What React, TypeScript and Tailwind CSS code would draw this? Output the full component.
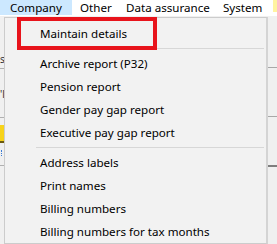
import React from 'react';

const topMenu = [
  { label: 'Company', width: 'w-[72px]', active: true },
  { label: 'Other', width: 'w-[46px]' },
  { label: 'Data assurance', width: 'w-[97px]' },
  { label: 'System', width: 'w-[55px]' },
];

const groups = [
  ['Maintain details'],
  ['Archive report (P32)', 'Pension report', 'Gender pay gap report', 'Executive pay gap report'],
  ['Address labels', 'Print names', 'Billing numbers', 'Billing numbers for tax months'],
];

export default function App() {
  return (
    <div className="relative w-[277px] h-[244px] overflow-hidden bg-[#f0f0f0] font-['Noto_Sans',sans-serif] text-[11.6px] leading-none text-black">
      {/* menu bar */}
      <div className="flex h-[16px] bg-white">
        {topMenu.map(item => (
          <div
            key={item.label}
            className={`${item.width} flex items-center h-[15px] ${item.active ? 'bg-[#cce8ff] pl-[10px]' : 'pl-[8px]'}`}
          >
            {item.label}
          </div>
        ))}
        <div className="ml-auto w-[4px] h-[12px] bg-[#fff3a0]" />
      </div>

      <div className="flex h-[228px]">
        {/* bits of the window behind the menu */}
        <div className="w-[4px] shrink-0 flex flex-col overflow-hidden pt-[38px] text-[10px] text-[#333]">
          <div className="h-[10px]">s</div>
          <div className="mt-[4px] h-px bg-[#b0b0b0]" />
          <div className="mt-[20px] h-[10px]">'l</div>
          <div className="mt-[18px] h-px bg-[#b0b0b0]" />
          <div className="mt-[7px] h-[18px] bg-[#f7d31a] border-b-2 border-[#6b5a10]" />
          <div className="mt-[7px] ml-[1px] h-[6px] border-l border-dotted border-[#3a7bd5]" />
          <div className="mt-[9px] h-px bg-[#b0b0b0]" />
        </div>

        {/* dropdown */}
        <div className="w-[264px] shrink-0 mt-[1px] border border-[#cccccc] border-r-2 border-r-[#d4d4d4] bg-[#f2f2f2] pt-[4px]">
          {groups.map((group, gi) => (
            <div key={gi}>
              {gi > 0 && (
                <div className="h-[7px] pt-[3px] pl-[31px] pr-[2px]">
                  <div className="h-px bg-[#d7d7d7]" />
                </div>
              )}
              {group.map(label => (
                <div key={label} className="h-[23px] flex items-center pl-[35px]">
                  {label}
                </div>
              ))}
            </div>
          ))}
        </div>

        {/* window behind, right side */}
        <div className="flex-1 flex flex-col pt-[51px]">
          <div className="h-px bg-[#a8a8a8]" />
          <div className="mt-[48px] h-px bg-[#a8a8a8]" />
          <div className="mt-[48px] h-[2px] bg-[#7e7e7e]" />
        </div>
      </div>

      {/* annotation */}
      <div className="absolute left-[17px] top-[17px] w-[140px] h-[33px] border-4 border-[#e8141c]" />
    </div>
  );
}
